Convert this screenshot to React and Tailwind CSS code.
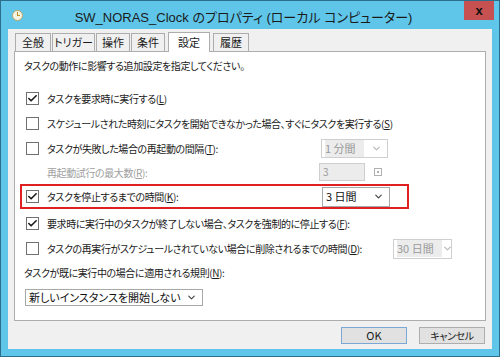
import { Check, ChevronDown } from 'lucide-react'

const jp = "font-['Segoe_UI','Noto_Sans_CJK_JP',sans-serif] [font-feature-settings:'palt']"

function Box({ checked }) {
  return (
    <span className="w-[13px] h-[13px] border border-[#707070] bg-white flex items-center justify-center shrink-0">
      {checked && <Check className="w-[11px] h-[11px] text-[#1a1a1a]" strokeWidth={3.5} />}
    </span>
  )
}

function Select({ value, w, disabled, h = 'h-[19px]' }) {
  return (
    <div className={`${w} ${h} shrink-0 border flex items-center justify-between pl-[3px] pr-[5px] whitespace-nowrap ${disabled ? 'border-[#cfcfcf] text-[#9a9a9a]' : 'border-[#a8a8a8] bg-white text-[#111]'}`}>
      <span className={`text-[11px] tracking-normal ${disabled ? 'bg-[#ececec] pr-[8px]' : ''}`}>{value}</span>
      <ChevronDown className={`w-[11px] h-[11px] shrink-0 ${disabled ? 'text-[#b8b8b8]' : 'text-[#444]'}`} strokeWidth={2.5} />
    </div>
  )
}

function Row({ checked, label, children, className = '' }) {
  return (
    <div className={`flex items-center h-[25px] pl-[6px] ${className}`}>
      <Box checked={checked} />
      <span className="ml-[8px] flex-1 whitespace-nowrap">{label}</span>
      {children}
    </div>
  )
}

export default function App() {
  const tabs = [
    ['全般', 'w-[36px]'],
    ['トリガー', 'w-[43px]'],
    ['操作', 'w-[34px]'],
    ['条件', 'w-[34px]'],
    ['設定', 'w-[42px]'],
    ['履歴', 'w-[36px]'],
  ]

  return (
    <div className={`w-[500px] h-[357px] bg-[#5fc6ea] border border-[#2d6e8c] flex flex-col ${jp} text-[10px] tracking-[-0.4px] text-[#1a1a1a]`}>
      {/* title bar */}
      <div className="h-[28px] flex items-start relative">
        <div className="mt-[9px] ml-[11px] w-[11px] h-[11px] rounded-full bg-[#f7f3e3] border border-[#b9a66a] relative">
          <span className="absolute left-[4px] top-[1px] w-[1px] h-[4px] bg-[#c09020]" />
          <span className="absolute left-[4px] top-[4px] w-[3px] h-[1px] bg-[#c09020]" />
        </div>
        <div className="flex-1 text-center text-[13px] tracking-normal mt-[7px] text-[#1a1a1a] font-['Liberation_Sans','Noto_Sans_CJK_JP',sans-serif] [font-feature-settings:'palt']">
          SW_NORAS_Clock のプロパティ (ローカル コンピューター)
        </div>
        <div className="w-[30px] h-[19px] bg-[#c75050] mr-[5px] flex items-center justify-center text-[#111] text-[13px] font-bold leading-none font-['Liberation_Sans',sans-serif]">
          x
        </div>
      </div>

      {/* client */}
      <div className="flex-1 mx-[7px] mb-[7px] bg-[#f0f0f0] flex flex-col px-[6px] pt-[2px]">
        <div className="flex items-end h-[20px] pl-[1px] gap-[1px]">
          {tabs.map(([t, w], i) => (
            <div
              key={t}
              className={
                i === 4
                  ? `${w} h-[20px] bg-white border border-b-0 border-[#adadad] -mb-px relative z-10 flex items-center justify-center mx-[2px]`
                  : `${w} h-[18px] bg-[#f0f0f0] border border-b-0 border-[#adadad] flex items-center justify-center`
              }
            >
              <span className="text-[11px] tracking-normal">{t}</span>
            </div>
          ))}
        </div>
        <div className="h-[270px] bg-white border border-[#adadad] flex flex-col pt-[5px] px-[5px]">
          <div className="h-[16px] flex items-center pl-[4px]">タスクの動作に影響する追加設定を指定してください。</div>
          <div className="h-[13px]" />
          <Row checked label={<>タスクを要求時に実行する(<u>L</u>)</>} />
          <Row label={<>スケジュールされた時刻にタスクを開始できなかった場合、すぐにタスクを実行する(<u>S</u>)</>} />
          <Row label={<>タスクが失敗した場合の再起動の間隔(<u>T</u>):</>}>
            <div className="mr-[92px]">
              <Select value="1 分間" w="w-[67px]" disabled />
            </div>
          </Row>
          <div className="flex items-center h-[22px] pl-[27px] text-[#a0a0a0]">
            <span className="flex-1">再起動試行の最大数(<u>R</u>):</span>
            <div className="w-[46px] h-[18px] border border-[#cfcfcf] bg-[#ececec] pl-[3px] leading-[16px] text-[#9a9a9a]">3</div>
            <span className="ml-[9px] mr-[98px] w-[8px] h-[8px] border border-[#b0b0b0] flex items-center justify-center">
              <span className="w-[2px] h-[2px] border border-[#b0b0b0]" />
            </span>
          </div>
          <div className="mt-[1px] w-[389px] h-[25px] border-2 border-[#e02020] flex items-center">
            <div className="flex items-center pl-[4px] flex-1">
              <Box checked />
              <span className="ml-[8px] flex-1">タスクを停止するまでの時間(<u>K</u>):</span>
              <div className="mr-[17px]">
                <Select value="3 日間" w="w-[68px]" h="h-[20px]" />
              </div>
            </div>
          </div>
          <Row checked className="mt-[2px]" label={<>要求時に実行中のタスクが終了しない場合、タスクを強制的に停止する(<u>F</u>):</>} />
          <Row label={<>タスクの再実行がスケジュールされていない場合に削除されるまでの時間(<u>D</u>):</>}>
            <div className="mr-[28px] shrink-0">
              <Select value="30 日間" w="w-[59px]" h="h-[20px]" disabled />
            </div>
          </Row>
          <div className="h-[22px] flex items-center pl-[4px]">タスクが既に実行中の場合に適用される規則(<u>N</u>):</div>
          <div className="mt-[6px] ml-[5px] w-[178px]">
            <Select value="新しいインスタンスを開始しない" w="w-[178px]" h="h-[17px]" />
          </div>
        </div>
        <div className="flex justify-end gap-[12px] mt-[6px] pr-[1px]">
          <button className="w-[66px] h-[17px] bg-[#e1e1e1] border border-[#7aa7d6] flex items-center justify-center leading-none text-[11px] tracking-normal">OK</button>
          <button className="w-[66px] h-[17px] bg-[#e1e1e1] border border-[#adadad] flex items-center justify-center leading-none">キャンセル</button>
        </div>
      </div>
    </div>
  )
}
